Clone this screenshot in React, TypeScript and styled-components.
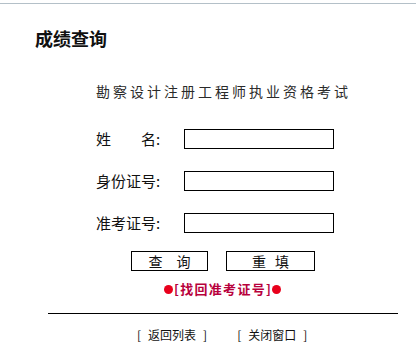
import React from "react";
import styled, { createGlobalStyle } from "styled-components";

const Global = createGlobalStyle`
  html, body { margin: 0; padding: 0; background: #fff; }
  body { font-family: "Noto Sans CJK SC", "Noto Sans", sans-serif; color: #000; }
`;

const Page = styled.div`
  width: 416px;
  height: 350px;
  padding-top: 3px;
  box-sizing: border-box;
  overflow: hidden;
`;

const TopRule = styled.div`
  height: 1px;
  background: #b4c0c8;
`;

const Title = styled.h1`
  margin: 24px 0 0 35px;
  font-size: 18px;
  line-height: 20px;
  font-weight: bold;
  color: #111;
`;

const Subtitle = styled.div`
  margin: 34px 0 0 96px;
  font-size: 14px;
  line-height: 18px;
  letter-spacing: 3px;
  color: #2a2a2a;
`;

const Form = styled.div`
  display: flex;
  flex-direction: column;
  gap: 22px;
  margin: 29px 0 0 96px;
`;

const Row = styled.div`
  display: flex;
  align-items: center;
  height: 20px;
`;

const Label = styled.span`
  width: 88px;
  font-size: 15px;
  line-height: 20px;
  color: #111;
`;

const Input = styled.input`
  box-sizing: border-box;
  width: 150px;
  height: 20px;
  border: 1px solid #000;
  padding: 0;
  margin: 0;
  background: #fff;
`;

const Buttons = styled.div`
  display: flex;
  gap: 18px;
  margin: 18px 0 0 131px;
`;

const Button = styled.button<{ $w: number }>`
  box-sizing: border-box;
  width: ${(p) => p.$w}px;
  height: 20px;
  border: 1px solid #000;
  background: #fff;
  padding: 0;
  font-family: "Noto Sans CJK SC", sans-serif;
  font-size: 14px;
  line-height: 18px;
  color: #111;
  white-space: pre;
`;

const Gap = styled.span<{ $w: number }>`
  display: inline-block;
  width: ${(p) => p.$w}px;
`;

const LinkRow = styled.div`
  display: flex;
  align-items: center;
  margin: 11px 0 0 164px;
  height: 14px;
`;

const Dot = styled.span`
  width: 9px;
  height: 9px;
  border-radius: 50%;
  background: #e8001c;
`;

const RedLink = styled.a`
  font-size: 13px;
  line-height: 14px;
  font-weight: bold;
  letter-spacing: 1.3px;
  color: #b8003c;
  text-decoration: none;
  margin: 0 0 0 1px;
`;

const Rule = styled.hr`
  margin: 17px 18px 0 48px;
  border: 0;
  height: 1px;
  background: #000;
`;

const Footer = styled.div`
  display: flex;
  gap: 30px;
  margin: 13px 0 0 137px;
  font-size: 12px;
  line-height: 16px;
  color: #111;
`;

const FooterLink = styled.span`
  display: flex;
  gap: 7px;
`;

export default function App() {
  return (
    <Page>
      <Global />
      <TopRule />
      <Title>成绩查询</Title>
      <Subtitle>勘察设计注册工程师执业资格考试</Subtitle>
      <Form>
        <Row>
          <Label>姓　　名:</Label>
          <Input type="text" />
        </Row>
        <Row>
          <Label>身份证号:</Label>
          <Input type="text" />
        </Row>
        <Row>
          <Label>准考证号:</Label>
          <Input type="text" />
        </Row>
      </Form>
      <Buttons>
        <Button $w={77}>
          查<Gap $w={14} />询
        </Button>
        <Button $w={89}>
          重<Gap $w={9} />填
        </Button>
      </Buttons>
      <LinkRow>
        <Dot />
        <RedLink href="#">[找回准考证号]</RedLink>
        <Dot />
      </LinkRow>
      <Rule />
      <Footer>
        <FooterLink>
          <span>[</span>
          <span>返回列表</span>
          <span>]</span>
        </FooterLink>
        <FooterLink>
          <span>[</span>
          <span>关闭窗口</span>
          <span>]</span>
        </FooterLink>
      </Footer>
    </Page>
  );
}
